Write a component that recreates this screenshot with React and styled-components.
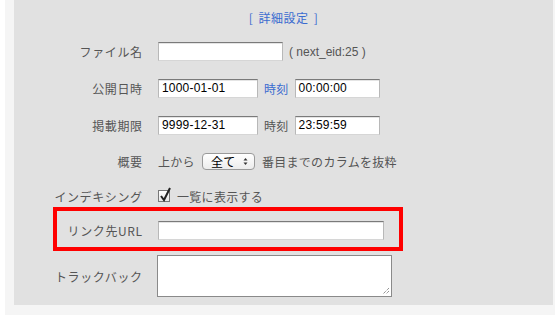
import styled, { createGlobalStyle } from "styled-components"

const Global = createGlobalStyle`
  body {
    margin: 0;
    background: #f5f5f5;
    font-family: "Liberation Sans", "Noto Sans CJK JP", sans-serif;
  }
`

const Page = styled.div`
  height: 315px;
  border-left: 5px solid #ffffff;
  padding-left: 9px;
  box-sizing: border-box;
`

const Panel = styled.div`
  width: 539px;
  height: 305px;
  background: #e1e1e1;
  display: flex;
  flex-direction: column;
`

const Title = styled.div`
  height: 34px;
  display: flex;
  align-items: center;
  justify-content: center;
  font-size: 12px;
  letter-spacing: 0.5px;
  word-spacing: 2px;
  color: #3a6bd0;
  font-family: "Noto Sans CJK JP", "Liberation Sans", sans-serif;
`

const Row = styled.div`
  position: relative;
  display: grid;
  grid-template-columns: 128px 1fr;
  column-gap: 16px;
  align-items: center;
  height: ${({ $h }) => $h}px;

  ${({ $marked }) =>
    $marked &&
    `
    &::after {
      content: "";
      position: absolute;
      left: 39px;
      top: -6px;
      width: 350px;
      height: 44px;
      border: 4px solid #ff0000;
      box-sizing: border-box;
      pointer-events: none;
    }
  `}
`

const Label = styled.div`
  text-align: right;
  font-size: 12px;
  letter-spacing: 0.6px;
  margin-right: -0.6px;
  color: #555;
  font-family: "Noto Sans CJK JP", "Liberation Sans", sans-serif;
`

const Field = styled.div`
  display: flex;
  align-items: center;
  gap: ${({ $gap }) => $gap || 6}px;
  font-size: 12px;
  letter-spacing: 0.3px;
  color: #555;
  font-family: "Noto Sans CJK JP", "Liberation Sans", sans-serif;
`

const Note = styled.span`
  font-family: "Liberation Sans", sans-serif;
  letter-spacing: 0;
`

const Input = styled.div`
  box-sizing: border-box;
  width: ${({ $w }) => $w}px;
  height: 19px;
  background: #fff;
  border: 1px solid #b8b8b8;
  border-top-color: #7a7a7a;
  border-bottom-color: #d6d6d6;
  box-shadow: inset 0 1px 0 #e4e4e4;
  padding: 0 3px;
  display: flex;
  align-items: center;
  font-family: "Liberation Sans", sans-serif;
  font-size: 12px;
  letter-spacing: 0.2px;
  color: #000;
`

const TextArea = styled.div`
  position: relative;
  box-sizing: border-box;
  width: 235px;
  height: 42px;
  margin-left: -1px;
  background: #fff;
  border: 1px solid #8a8a8a;
`

const Grip = styled.svg`
  position: absolute;
  right: 1px;
  bottom: 1px;
`

const Link = styled.span`
  color: ${({ $blue }) => ($blue ? "#3a6bd0" : "#555")};
`

const Select = styled.div`
  box-sizing: border-box;
  width: 53px;
  height: 17px;
  border: 1px solid #9a9a9a;
  border-radius: 4px;
  background: linear-gradient(#ffffff, #ececec);
  display: flex;
  align-items: center;
  justify-content: space-between;
  padding: 0 6px 0 8px;
  color: #000;
  font-size: 12px;
`

const Check = styled.div`
  box-sizing: border-box;
  width: 12px;
  height: 12px;
  border: 1px solid #777;
  background: linear-gradient(#fff, #e8e8e8);
  position: relative;
  margin-right: 1px;
`

const CheckMark = styled.svg`
  position: absolute;
  left: 0;
  top: -4px;
`

export default function App() {
  return (
    <>
      <Global />
      <Page>
        <Panel>
          <Title>[ 詳細設定 ]</Title>

          <Row $h={35}>
            <Label>ファイル名</Label>
            <Field>
              <Input $w={125} />
              <Note>( next_eid:25 )</Note>
            </Field>
          </Row>

          <Row $h={38}>
            <Label>公開日時</Label>
            <Field>
              <Input $w={100}>1000-01-01</Input>
              <Link $blue>時刻</Link>
              <Input $w={85}>00:00:00</Input>
            </Field>
          </Row>

          <Row $h={36}>
            <Label>掲載期限</Label>
            <Field>
              <Input $w={100}>9999-12-31</Input>
              <Link>時刻</Link>
              <Input $w={85}>23:59:59</Input>
            </Field>
          </Row>

          <Row $h={36}>
            <Label>概要</Label>
            <Field $gap={7}>
              <span>上から</span>
              <Select>
                <span>全て</span>
                <svg width="5" height="9" viewBox="0 0 5 9">
                  <path d="M0.5 3.5 L2.5 1 L4.5 3.5 Z" fill="#333" />
                  <path d="M0.5 5.5 L2.5 8 L4.5 5.5 Z" fill="#333" />
                </svg>
              </Select>
              <span>番目までのカラムを抜粋</span>
            </Field>
          </Row>

          <Row $h={34}>
            <Label>インデキシング</Label>
            <Field>
              <Check>
                <CheckMark width="13" height="15" viewBox="0 0 13 15">
                  <path d="M2 9 L5 13 L11 1" stroke="#222" strokeWidth="2" fill="none" />
                </CheckMark>
              </Check>
              <span>一覧に表示する</span>
            </Field>
          </Row>

          <Row $h={34} $marked>
            <Label>リンク先URL</Label>
            <Field>
              <Input $w={226} />
            </Field>
          </Row>

          <Row $h={58}>
            <Label>トラックバック</Label>
            <Field>
              <TextArea>
                <Grip width="9" height="9" viewBox="0 0 9 9">
                  <path d="M8 2 L2 8 M8 5 L5 8" stroke="#666" strokeWidth="1" strokeDasharray="1 1" />
                </Grip>
              </TextArea>
            </Field>
          </Row>
        </Panel>
      </Page>
    </>
  )
}
